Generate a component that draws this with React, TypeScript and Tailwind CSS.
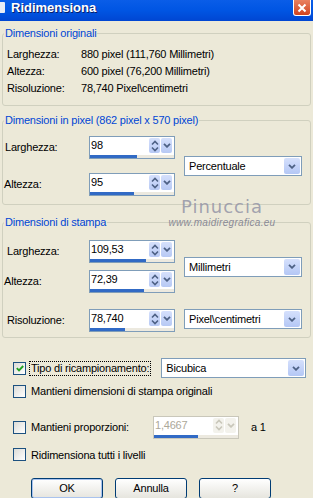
import React from 'react';

// ─── Controlli in stile Windows XP (Luna) ────────────────────────────────────

const Chevron = ({ color }: { color: string }) => (
    <svg width="8" height="5" viewBox="0 0 8 5">
        <path d="M1 0.8 L4 3.8 L7 0.8" stroke={color} strokeWidth="1.8" fill="none" />
    </svg>
);

// Casella numerica con frecce e barra di scorrimento sotto
const SpinBox = ({ value, fill, disabled }: { value: string; fill: number; disabled?: boolean }) => {
    const arrow = disabled ? '#C9C7BA' : '#4D6185';
    return (
        <div
            className={`w-[86px] h-[23px] border flex flex-col ${
                disabled ? 'border-[#C9C7BA]' : 'border-[#7F9DB9]'
            } bg-white`}
        >
            <div className="flex h-[17px] items-stretch pr-[2px]">
                <span
                    className={`flex-1 pl-[1px] leading-[17px] ${disabled ? 'text-[#ACA899]' : 'text-black'}`}
                >
                    {value}
                </span>
                <div className="flex gap-[1px] py-[1px]">
                    <div
                        className={`w-[11px] rounded-[2px] flex items-center justify-center ${
                            disabled ? 'bg-[#F3F2EC]' : 'bg-gradient-to-b from-[#D5E0FC] to-[#B7C9F4]'
                        }`}
                    >
                        <svg width="8" height="12" viewBox="0 0 8 12">
                            <path d="M1 4.5 L4 1.5 L7 4.5 M1 7.5 L4 10.5 L7 7.5" stroke={arrow} strokeWidth="1.6" fill="none" />
                        </svg>
                    </div>
                    <div
                        className={`w-[11px] rounded-[2px] flex items-center justify-center ${
                            disabled ? 'bg-[#F3F2EC]' : 'bg-gradient-to-b from-[#D5E0FC] to-[#B7C9F4]'
                        }`}
                    >
                        <Chevron color={arrow} />
                    </div>
                </div>
            </div>
            {/* barra di avanzamento del valore */}
            <div className="flex-1 bg-[#ECE9DF] border-t border-white">
                <div className="h-full bg-[#316AC5]" style={{ width: fill }} />
            </div>
        </div>
    );
};

const Dropdown = ({ value, className }: { value: string; className: string }) => (
    <div className={`h-[20px] border border-[#7F9DB9] bg-white flex items-stretch p-[1px] ${className}`}>
        <span className="flex-1 pl-[3px] leading-[16px] text-black">{value}</span>
        <div className="w-[16px] rounded-[2px] bg-gradient-to-b from-[#D5E0FC] to-[#B4C7F5] flex items-center justify-center">
            <Chevron color="#4D6185" />
        </div>
    </div>
);

const CheckBox = ({ checked }: { checked?: boolean }) => (
    <div className="w-[13px] h-[13px] shrink-0 border border-[#1C5180] bg-gradient-to-br from-[#DCDCD7] to-white flex items-center justify-center">
        {checked && (
            <svg width="8" height="7" viewBox="0 0 8 7">
                <path d="M0.8 3.2 L3 5.4 L7.2 1" stroke="#21A121" strokeWidth="1.9" fill="none" />
            </svg>
        )}
    </div>
);

const XpButton = ({ label, primary }: { label: string; primary?: boolean }) => (
    <button
        className={`w-[72px] h-[21px] border border-[#003C74] rounded-[3px] bg-gradient-to-b from-white to-[#E6E5DE] text-black leading-none ${
            primary ? 'shadow-[inset_0_0_0_1px_#A9C3EE]' : ''
        }`}
    >
        {label}
    </button>
);

// ─── Finestra ────────────────────────────────────────────────────────────────

export default function App() {
    return (
        <div className="relative w-[313px] h-[498px] overflow-hidden bg-[#ECE9D8] font-['Liberation_Sans',Arial,sans-serif] text-[11px] text-black tracking-[-0.2px]">
            {/* barra del titolo */}
            <div className="h-[21px] flex items-start bg-gradient-to-b from-[#0A5DE8] via-[#0055E3] to-[#0046D2]">
                <div className="w-[5px] h-[11px] mt-[2px] bg-[#E9ECF5] rounded-r-[1px]" />
                <span className="ml-[6px] mt-[1px] text-white font-bold text-[13px] leading-[14px] tracking-[0px] [text-shadow:1px_1px_0_#0A1F6A]">
                    Ridimensiona
                </span>
                <div className="ml-auto mr-[2px] w-[18px] h-[16px] rounded-b-[3px] border border-t-0 border-white bg-gradient-to-b from-[#E9805F] to-[#D0421C] flex items-center justify-center">
                    <svg width="10" height="10" viewBox="0 0 10 10">
                        <path d="M1.5 1.5 L8.5 8.5 M8.5 1.5 L1.5 8.5" stroke="white" strokeWidth="2" />
                    </svg>
                </div>
            </div>

            {/* Dimensioni originali */}
            <fieldset className="mx-[2px] mt-[6px] border border-[#D0D0BF] rounded-[3px] pb-[8px]">
                <legend className="ml-[1px] px-[1px] leading-[13px] text-[#0046D5]">Dimensioni originali</legend>
                <div className="mt-[6px] grid grid-cols-[74px_1fr] pl-[4px] leading-[17px]">
                    <span>Larghezza:</span>
                    <span>880 pixel (111,760 Millimetri)</span>
                    <span>Altezza:</span>
                    <span>600 pixel (76,200 Millimetri)</span>
                    <span>Risoluzione:</span>
                    <span>78,740 Pixel\centimetri</span>
                </div>
            </fieldset>

            {/* Dimensioni in pixel */}
            <fieldset className="mx-[2px] mt-[8px] border border-[#D0D0BF] rounded-[3px] pb-[8px]">
                <legend className="ml-[1px] px-[1px] leading-[13px] text-[#0046D5]">
                    Dimensioni in pixel (862 pixel x 570 pixel)
                </legend>
                <div className="mt-[9px] flex items-center">
                    <div className="flex flex-col gap-[14px]">
                        <div className="flex items-center">
                            <span className="w-[86px] pl-[2px]">Larghezza:</span>
                            <SpinBox value="98" fill={47} />
                        </div>
                        <div className="flex items-center">
                            <span className="w-[86px] pl-[1px]">Altezza:</span>
                            <SpinBox value="95" fill={44} />
                        </div>
                    </div>
                    <Dropdown value="Percentuale" className="ml-[9px] w-[118px]" />
                </div>
            </fieldset>

            {/* Dimensioni di stampa */}
            <fieldset className="mx-[2px] mt-[11px] border border-[#D0D0BF] rounded-[3px] pb-[5px]">
                <legend className="ml-[1px] px-[1px] leading-[13px] text-[#0046D5]">Dimensioni di stampa</legend>
                <div className="mt-[11px] flex items-center">
                    <div className="flex flex-col gap-[7px]">
                        <div className="flex items-center">
                            <span className="w-[86px] pl-[4px]">Larghezza:</span>
                            <SpinBox value="109,53" fill={56} />
                        </div>
                        <div className="flex items-center">
                            <span className="w-[86px] pl-[1px]">Altezza:</span>
                            <SpinBox value="72,39" fill={54} />
                        </div>
                    </div>
                    <Dropdown value="Millimetri" className="ml-[9px] w-[118px]" />
                </div>
                <div className="mt-[16px] flex items-start">
                    <span className="w-[86px] pl-[4px] leading-[23px]">Risoluzione:</span>
                    <SpinBox value="78,740" fill={35} />
                    <Dropdown value="Pixel\centimetri" className="ml-[9px] w-[118px]" />
                </div>
            </fieldset>

            {/* opzioni di ricampionamento */}
            <div className="mt-[20px] pl-[13px] flex items-center">
                <CheckBox checked />
                <span className="ml-[3px] px-[1px] border border-dotted border-black leading-[13px]">
                    Tipo di ricampionamento:
                </span>
                <Dropdown value="Bicubica" className="ml-[10px] w-[145px]" />
            </div>
            <div className="mt-[5px] pl-[13px] flex items-center">
                <CheckBox />
                <span className="ml-[5px]">Mantieni dimensioni di stampa originali</span>
            </div>
            <div className="mt-[16px] pl-[13px] flex items-center">
                <CheckBox />
                <span className="ml-[5px] w-[122px]">Mantieni proporzioni:</span>
                <SpinBox value="1,4667" fill={44} disabled />
                <span className="ml-[12px]">a 1</span>
            </div>
            <div className="mt-[8px] pl-[13px] flex items-center">
                <CheckBox />
                <span className="ml-[5px]">Ridimensiona tutti i livelli</span>
            </div>

            {/* pulsanti */}
            <div className="mt-[15px] pl-[31px] flex gap-[12px]">
                <XpButton label="OK" primary />
                <XpButton label="Annulla" />
                <XpButton label="?" />
            </div>

            {/* filigrana sopra il contenuto */}
            <div className="absolute left-[160px] top-[197px] w-[124px] flex flex-col items-center pointer-events-none">
                <span className="text-[18px] leading-[20px] tracking-[1px] text-[#8E8FA3]/80 font-['DejaVu_Sans',sans-serif]">
                    Pinuccia
                </span>
                <span className="text-[10px] leading-[12px] italic tracking-[0.3px] text-[#8A8A96]">
                    www.maidiregrafica.eu
                </span>
            </div>
        </div>
    );
}
